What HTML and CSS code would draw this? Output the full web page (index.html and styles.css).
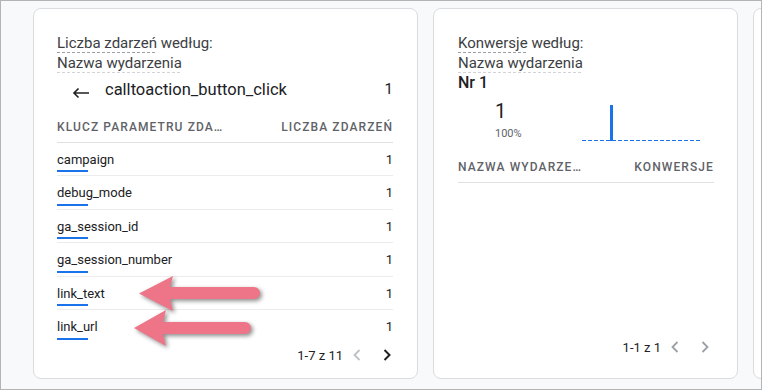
FILE: index.html
```html
<!DOCTYPE html>
<html lang="pl">
<head>
    <meta charset="UTF-8">
    <meta name="viewport" content="width=device-width, initial-scale=1.0">
    <title>Zdarzenia i konwersje</title>
    <link rel="stylesheet" href="styles.css">
</head>
<body>
    <div class="frame">
        <div class="cards">

            <!-- Liczba zdarzeń -->
            <div class="card card-events">
                <div class="card-title">
                    <div><span class="dim">Liczba zdarzeń</span> według:</div>
                    <div><span class="dim light">Nazwa wydarzenia</span></div>
                </div>

                <div class="drill">
                    <svg class="back" width="18" height="12" viewBox="0 0 18 12">
                        <path d="M17 6H2M6.5 1.5L2 6l4.5 4.5" fill="none" stroke="#202124" stroke-width="1.6"/>
                    </svg>
                    <span class="drill-name">calltoaction_button_click</span>
                    <span class="drill-value">1</span>
                </div>

                <div class="table">
                    <div class="thead">
                        <span>KLUCZ PARAMETRU ZDA…</span>
                        <span>LICZBA ZDARZEŃ</span>
                    </div>
                    <div class="row"><span>campaign</span><span>1</span><i class="bar"></i></div>
                    <div class="row"><span>debug_mode</span><span>1</span><i class="bar"></i></div>
                    <div class="row"><span>ga_session_id</span><span>1</span><i class="bar"></i></div>
                    <div class="row"><span>ga_session_number</span><span>1</span><i class="bar"></i></div>
                    <div class="row"><span>link_text</span><span>1</span><i class="bar"></i></div>
                    <div class="row"><span>link_url</span><span>1</span><i class="bar"></i></div>
                </div>

                <div class="pager">
                    <span>1-7 z 11</span>
                    <svg class="prev" width="8" height="12" viewBox="0 0 8 12"><path d="M6.5 1L1.5 6l5 5" fill="none" stroke="#bdc1c6" stroke-width="1.8"/></svg>
                    <svg class="next" width="8" height="12" viewBox="0 0 8 12"><path d="M1.5 1l5 5-5 5" fill="none" stroke="#202124" stroke-width="2"/></svg>
                </div>

                <!-- strzałki z adnotacji -->
                <svg class="marks" width="150" height="90" viewBox="0 0 150 90">
                    <path d="M13 27.5L47 10 44 21H128A6 6 0 0 1 128 33H44L47 45Z" fill="#ee7587"/>
                    <path d="M8 62L40 44 37 56H119A6 6 0 0 1 119 68H37L40 80Z" fill="#ee7587"/>
                </svg>
            </div>

            <!-- Konwersje -->
            <div class="card card-conv">
                <div class="card-title">
                    <div><span class="dim">Konwersje</span> według:</div>
                    <div><span class="dim light">Nazwa wydarzenia</span></div>
                </div>
                <div class="rank">Nr 1</div>

                <div class="summary">
                    <div class="stat">
                        <div class="stat-value">1</div>
                        <div class="stat-share">100%</div>
                    </div>
                    <div class="spark">
                        <i class="spark-bar"></i>
                    </div>
                </div>

                <div class="table">
                    <div class="thead">
                        <span>NAZWA WYDARZE…</span>
                        <span>KONWERSJE</span>
                    </div>
                </div>

                <div class="pager">
                    <span>1-1 z 1</span>
                    <svg class="prev" width="8" height="12" viewBox="0 0 8 12"><path d="M6.5 1L1.5 6l5 5" fill="none" stroke="#9aa0a6" stroke-width="1.8"/></svg>
                    <svg class="next" width="8" height="12" viewBox="0 0 8 12"><path d="M1.5 1l5 5-5 5" fill="none" stroke="#9aa0a6" stroke-width="1.8"/></svg>
                </div>
            </div>

            <div class="card card-next"></div>
        </div>
    </div>
</body>
</html>
```

FILE: styles.css
```css
:root {
    --text-color: #202124;
    --muted-color: #5f6368;
    --line-color: #e0e0e0;
    --blue: #1a73e8;
}

body {
    margin: 0;
    font-family: Roboto, 'Noto Sans', sans-serif;
    color: var(--text-color);
}

.frame {
    width: 762px;
    height: 390px;
    box-sizing: border-box;
    border: 1px solid #b4b4b4;
    background-color: #f8f9fa;
    overflow: hidden;
}

.cards {
    display: flex;
    gap: 15px;
    padding: 7px 0 0 32px;
}

.card {
    position: relative;
    flex: none;
    height: 371px;
    box-sizing: border-box;
    background: white;
    border: 1px solid #dadce0;
    border-radius: 8px;
    display: flex;
    flex-direction: column;
}

.card-events {
    width: 385px;
    padding: 24px 24px 0 23px;
}

.card-conv {
    width: 305px;
    padding: 24px 23px 0 24px;
}

.card-next {
    width: 200px;
}

.card-title {
    font-size: 15px;
    line-height: 20px;
    color: #3c4043;
}

.card-title div {
    height: 20px;
}

.dim {
    display: inline-block;
    vertical-align: top;
    height: 20px;
    background: linear-gradient(to right, #9aa0a6 60%, transparent 60%) left bottom / 5px 1px repeat-x;
}

.dim.light {
    background-image: linear-gradient(to right, #d0d3d7 60%, transparent 60%);
}

.drill {
    display: flex;
    align-items: center;
    height: 32px;
    padding-left: 15px;
}

.back {
    margin-top: 7px;
    margin-right: 15px;
}

.drill-name {
    flex: 1;
    font-size: 16.5px;
}

.drill-value {
    font-size: 15px;
}

.table {
    margin-top: 7px;
}

.thead {
    display: flex;
    justify-content: space-between;
    height: 30px;
    line-height: 30px;
    font-size: 12px;
    font-weight: 500;
    letter-spacing: 1.1px;
    color: var(--muted-color);
    border-bottom: 1px solid var(--line-color);
}

.row {
    position: relative;
    display: flex;
    justify-content: space-between;
    height: 33.4px;
    padding-top: 6px;
    box-sizing: border-box;
    font-size: 13px;
    line-height: 21px;
    color: var(--text-color);
    border-bottom: 1px solid #ececec;
}

.row:last-child {
    border-bottom: none;
}

.bar {
    position: absolute;
    left: 0;
    bottom: 3px;
    width: 31px;
    height: 2px;
    background-color: var(--blue);
}

.pager {
    display: flex;
    justify-content: flex-end;
    align-items: center;
    height: 16px;
    margin-top: 4px;
    padding-right: 2px;
    font-size: 13px;
    color: var(--text-color);
}

.pager .prev {
    margin-left: 10px;
}

.pager .next {
    margin-left: 22px;
}

.card-conv .pager {
    margin-top: auto;
    margin-bottom: 23px;
    padding-right: 5px;
}

.rank {
    font-size: 16px;
    font-weight: 500;
    line-height: 20px;
}

.summary {
    display: flex;
    align-items: flex-start;
    margin-top: 6px;
}

.stat {
    width: 87px;
    padding-left: 37px;
}

.stat-value {
    font-size: 20px;
    line-height: 24px;
}

.stat-share {
    font-size: 11px;
    line-height: 13px;
    color: var(--muted-color);
    margin-top: 4px;
}

.spark {
    display: flex;
    align-items: flex-end;
    width: 119px;
    height: 36px;
    margin-top: 6px;
    background: repeating-linear-gradient(to right, var(--blue) 0 4px, transparent 4px 6px) bottom / 100% 1.5px no-repeat;
}

.spark-bar {
    width: 3px;
    height: 36px;
    margin-left: 28px;
    background-color: var(--blue);
}

.card-conv .table {
    margin-top: 11px;
}

.marks {
    position: absolute;
    left: 92px;
    top: 257px;
    filter: drop-shadow(2px 2px 2px rgba(0, 0, 0, 0.45));
}
```
